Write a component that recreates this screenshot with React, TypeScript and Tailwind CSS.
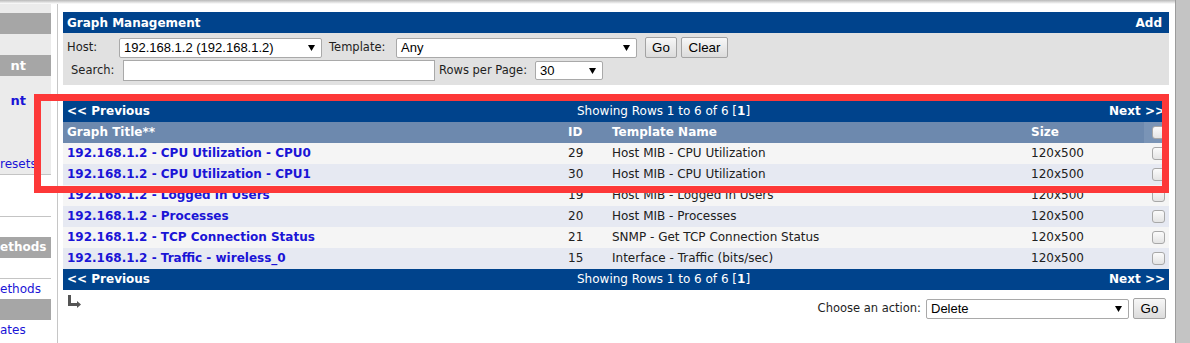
import React from 'react';

const LINK = 'text-[#1a14d6]';

const rows = [
  { title: '192.168.1.2 - CPU Utilization - CPU0', id: '29', template: 'Host MIB - CPU Utilization' },
  { title: '192.168.1.2 - CPU Utilization - CPU1', id: '30', template: 'Host MIB - CPU Utilization' },
  { title: '192.168.1.2 - Logged in Users', id: '19', template: 'Host MIB - Logged in Users' },
  { title: '192.168.1.2 - Processes', id: '20', template: 'Host MIB - Processes' },
  { title: '192.168.1.2 - TCP Connection Status', id: '21', template: 'SNMP - Get TCP Connection Status' },
  { title: '192.168.1.2 - Traffic - wireless_0', id: '15', template: 'Interface - Traffic (bits/sec)' },
];

const Arrow = () => (
  <svg width="7" height="6" viewBox="0 0 7 6">
    <path d="M0 0h7L3.5 6z" fill="#000" />
  </svg>
);

const Select = ({ value, className }: { value: string; className: string }) => (
  <div
    className={`flex items-center justify-between bg-white border border-[#a9a9a9] rounded-[2px] pl-[4px] pr-[6px] font-['Liberation_Sans',sans-serif] text-[13px] text-black ${className}`}
  >
    <span className="whitespace-nowrap">{value}</span>
    <Arrow />
  </div>
);

const Button = ({ label, className }: { label: string; className: string }) => (
  <div
    className={`flex items-center justify-center bg-linear-to-b from-[#f7f7f7] to-[#dcdcdc] border border-[#a3a3a3] rounded-[2px] font-['Liberation_Sans',sans-serif] text-[13.33px] text-black ${className}`}
  >
    {label}
  </div>
);

const Checkbox = () => (
  <div className="w-[13px] h-[13px] rounded-[3px] border border-[#a8a8a8] bg-linear-to-b from-[#fbfbfb] to-[#e4e4e4]" />
);

const NavBar = () => (
  <div className="flex items-center h-[21px] pb-[1px] bg-[#00438c] text-white text-[12px]">
    <div className="w-[514px] pl-[4px] font-bold">&lt;&lt; Previous</div>
    <div className="whitespace-nowrap">
      Showing Rows 1 to 6 of 6 [<strong>1</strong>]
    </div>
    <div className="flex-1 text-right pr-[4px] font-bold">Next &gt;&gt;</div>
  </div>
);

// the sidebar is scrolled sideways in the screenshot: only word endings show
function Sidebar() {
  return (
    <div className="w-[57px] shrink-0 flex flex-col text-[12px]">
      <div className="w-[51px] h-[171px] bg-[#ebebeb] flex flex-col border-b border-[#c4c4c4]">
        <div className="mt-[9px] h-[21px] bg-[#a6a6a6]" />
        <div className="mt-[21px] h-[21px] leading-[21px] bg-[#a6a6a6] text-right pr-[25px] text-white font-bold text-[13px]">
          nt
        </div>
        <div className={`mt-[15px] h-[20px] leading-[20px] text-right pr-[25px] font-bold text-[13px] ${LINK}`}>nt</div>
        <div className={`mt-[43px] h-[20px] leading-[20px] text-right pr-[19px] ${LINK}`}>resets</div>
      </div>
      <div className="w-[51px] h-[42px] border-b border-[#c4c4c4]" />
      <div className="w-[51px] mt-[20px] h-[21px] leading-[21px] bg-[#a6a6a6] text-right pr-[5px] text-white font-bold">
        ethods
      </div>
      <div className="w-[51px] h-[21px] border-b border-[#c4c4c4]" />
      <div className={`w-[51px] h-[20px] leading-[20px] text-right pr-[11px] ${LINK}`}>ethods</div>
      <div className="w-[51px] h-[21px] bg-[#a6a6a6]" />
      <div className={`w-[51px] h-[20px] leading-[20px] text-right pr-[29px] ${LINK}`}>ates</div>
    </div>
  );
}

export default function App() {
  return (
    <div className="relative w-[1190px] h-[343px] overflow-hidden bg-white flex font-['DejaVu_Sans',sans-serif]">
      <div className="flex-1 flex flex-col">
        <div className="h-[4px] bg-linear-to-b from-[#b9b9b9] to-white" />
        <div className="flex flex-1">
          <Sidebar />
          <div className="flex-1 border-l border-[#c6c6c6] pl-[5px] pr-[6px] pt-[8px]">
            {/* Header */}
            <div className="flex items-center justify-between h-[21px] bg-[#00438c] px-[4px] text-white font-bold text-[12px]">
              <span>Graph Management</span>
              <span className="pr-[3px]">Add</span>
            </div>

            {/* Filter */}
            <div className="h-[52px] bg-[#e1e1e1] pl-[4px] pt-[4px] text-[11.5px] text-[#1e1e1e]">
              <div className="flex items-center h-[21px]">
                <div className="w-[52px]">Host:</div>
                <Select value="192.168.1.2 (192.168.1.2)" className="w-[203px] h-[20px]" />
                <div className="w-[74px] pl-[7px]">Template:</div>
                <Select value="Any" className="w-[241px] h-[20px]" />
                <Button label="Go" className="ml-[8px] w-[32px] h-[21px]" />
                <Button label="Clear" className="ml-[4px] w-[47px] h-[21px]" />
              </div>
              <div className="flex items-center h-[21px] mt-[2px]">
                <div className="w-[56px] pl-[4px]">Search:</div>
                <div className="w-[312px] h-[21px] bg-white border border-[#a9a9a9]" />
                <div className="w-[100px] pl-[4px]">Rows per Page:</div>
                <Select value="30" className="w-[68px] h-[19px]" />
              </div>
            </div>

            {/* Table */}
            <div className="mt-[16px]">
              <NavBar />
              <div className="grid grid-cols-[501px_44px_419px_117px_25px] h-[21px] items-center bg-[#6d89ae] text-white font-bold text-[12px]">
                <div className="pl-[4px] pb-[1px]">Graph Title**</div>
                <div className="pl-[4px] pb-[1px]">ID</div>
                <div className="pl-[4px] pb-[1px]">Template Name</div>
                <div className="pl-[4px] pb-[1px]">Size</div>
                <div className="h-full flex items-center pl-[8px] bg-[#7a94b6]">
                  <Checkbox />
                </div>
              </div>
              {rows.map((r, i) => (
                <div
                  key={r.id}
                  className={`grid grid-cols-[501px_44px_419px_117px_25px] h-[21px] items-center text-[12px] text-[#202020] ${
                    i % 2 === 0 ? 'bg-[#f5f5f5]' : 'bg-[#e6e9f2]'
                  }`}
                >
                  <div className={`pl-[4px] pb-[2px] font-bold whitespace-nowrap ${LINK}`}>{r.title}</div>
                  <div className="pl-[4px] pb-[2px]">{r.id}</div>
                  <div className="pl-[4px] pb-[2px] whitespace-nowrap">{r.template}</div>
                  <div className="pl-[4px] pb-[2px]">120x500</div>
                  <div className="pl-[8px]">
                    <Checkbox />
                  </div>
                </div>
              ))}
              <NavBar />
            </div>

            {/* Actions */}
            <div className="flex justify-between pr-[3px]">
              <svg className="ml-[5px] mt-[5px]" width="14" height="13" viewBox="0 0 14 13">
                <path d="M1.5 0v9.5h8" stroke="#555" strokeWidth="3" fill="none" />
                <path d="M9 6l4 3.5L9 13z" fill="#555" />
              </svg>
              <div className="flex items-center mt-[8px] text-[11.5px] text-[#1e1e1e]">
                <span className="mr-[5px]">Choose an action:</span>
                <Select value="Delete" className="w-[203px] h-[20px]" />
                <Button label="Go" className="ml-[4px] w-[33px] h-[21px]" />
              </div>
            </div>
          </div>
        </div>
      </div>
      <div className="w-[15px] border-l border-[#9c9c9c] bg-[#c4c4c4]" />

      {/* Highlight box */}
      <div className="absolute left-[34px] top-[94px] w-[1135px] h-[99px] border-[7px] border-[#fd3838]" />
    </div>
  );
}
